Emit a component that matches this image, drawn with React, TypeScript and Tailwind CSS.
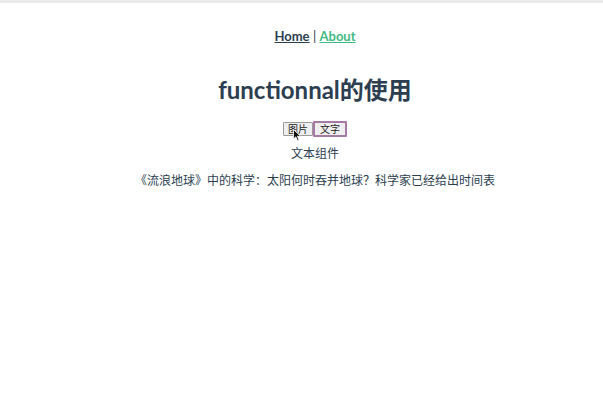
export default function App() {
  return (
    <div className="relative w-[603px] h-[402px] bg-white text-[#2c3e50] text-center" style={{ fontFamily: 'Lato, "Noto Sans CJK SC", sans-serif' }}>
      <div className="h-[3px] bg-[#ececec]" />
      <div className="pl-[27px]">
        <nav className="pt-[25px] text-[13px] font-bold leading-[16px]">
          <a className="underline text-[#2c3e50]">Home</a>
          <span className="font-normal"> | </span>
          <a className="underline text-[#42b983]">About</a>
        </nav>
        <h1 className="mt-[32px] text-[24px] font-bold leading-[28px]">functionnal的使用</h1>
        <div className="mt-[17px] flex justify-center items-center">
          <button className="relative h-[14px] px-[4px] text-[10px] leading-[12px] text-[#222] bg-[#efefef] border border-[#999] rounded-[1px]" style={{ fontFamily: '"Noto Sans CJK SC", sans-serif' }}>
            图片
            <svg className="absolute left-[9px] top-[6px]" width="9" height="13" viewBox="0 0 9 13">
              <path d="M0.5 0.5 L0.5 10 L2.8 7.8 L4.5 11.8 L6 11.2 L4.4 7.3 L7.6 7.3 Z" fill="#111" stroke="#fff" strokeWidth="0.8" />
            </svg>
          </button>
          <button className="h-[16px] px-[5px] text-[10px] leading-[12px] text-[#222] bg-[#efefef] border-2 border-[#a77aa6] rounded-[1px]" style={{ fontFamily: '"Noto Sans CJK SC", sans-serif' }}>
            文字
          </button>
        </div>
        <div className="mt-[9px] text-[12px] leading-[16px]">文本组件</div>
        <p className="mt-[11px] text-[12px] leading-[16px]">《流浪地球》中的科学：太阳何时吞并地球？科学家已经给出时间表</p>
      </div>
    </div>
  );
}
